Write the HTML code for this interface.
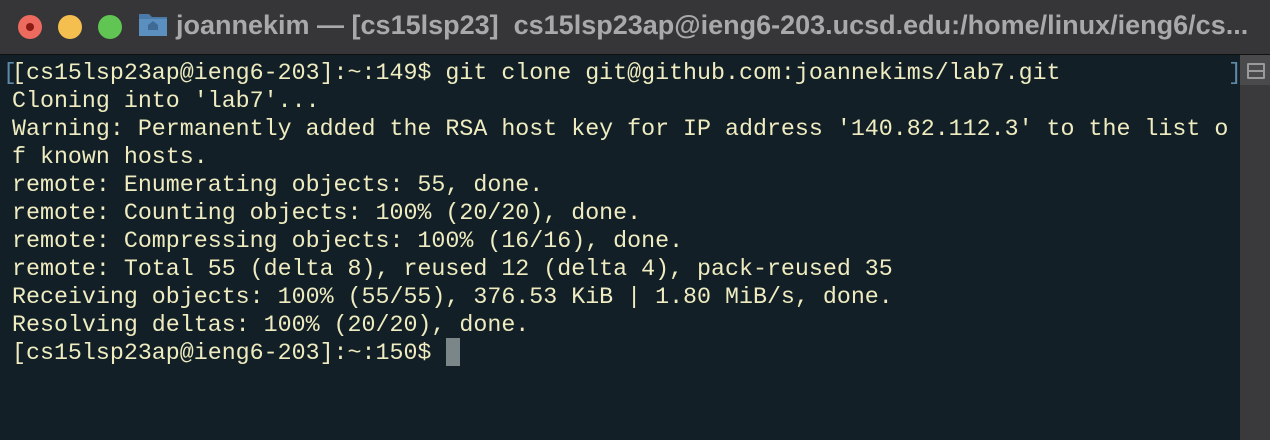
<!DOCTYPE html>
<html><head><style>
body{margin:0;width:1270px;height:440px;overflow:hidden;background:#131f26;font-family:"Liberation Sans",sans-serif}
.tb{position:absolute;left:0;top:0;width:1270px;height:54px;background:#363638;border-bottom:1px solid #111}
.d{position:absolute;top:15px;width:24px;height:24px;border-radius:50%}
.t{position:absolute;left:176px;top:10px;font-size:27px;font-weight:bold;color:#a9a9ab;white-space:nowrap}
.term{position:absolute;left:12px;top:59px;font-family:"Liberation Mono",monospace;font-size:23.3px;line-height:28px;color:#eeecc0;white-space:pre}
.sb{position:absolute;left:1240px;top:55px;width:30px;height:385px;background:#3a3a3c}
.cur{position:absolute;left:446px;top:338px;width:14px;height:28px;background:#7a8688}
</style></head><body>
<div class="tb">
<div class="d" style="left:18px;background:#ec6a5e"><div style="position:absolute;left:8px;top:8px;width:8px;height:8px;border-radius:50%;background:#8a1a12"></div></div>
<div class="d" style="left:58px;background:#f4bf4f"></div>
<div class="d" style="left:98px;background:#61c554"></div>
<svg style="position:absolute;left:138px;top:11px" width="30" height="26"><path d="M1 3h10l3 3h15v19H1z" fill="#4a7aa8"/><path d="M1 8h28v17H1z" fill="#5b8fc0"/><path d="M10 19v-5l5-4 5 4v5z" fill="#3f6a95"/></svg>
<div class="t">joannekim — [cs15lsp23]&nbsp; cs15lsp23ap@ieng6-203.ucsd.edu:/home/linux/ieng6/cs...</div>
</div>
<div style="position:absolute;left:3px;top:59px;color:#5d8aa8;font-family:'Liberation Mono',monospace;font-size:23px;line-height:28px">[</div>
<div style="position:absolute;left:1228px;top:59px;color:#5d8aa8;font-family:'Liberation Mono',monospace;font-size:23px;line-height:28px">]</div>
<div class="term">[cs15lsp23ap@ieng6-203]:~:149$ git clone git@github.com:joannekims/lab7.git
Cloning into 'lab7'...
Warning: Permanently added the RSA host key for IP address '140.82.112.3' to the list o
f known hosts.
remote: Enumerating objects: 55, done.
remote: Counting objects: 100% (20/20), done.
remote: Compressing objects: 100% (16/16), done.
remote: Total 55 (delta 8), reused 12 (delta 4), pack-reused 35
Receiving objects: 100% (55/55), 376.53 KiB | 1.80 MiB/s, done.
Resolving deltas: 100% (20/20), done.
[cs15lsp23ap@ieng6-203]:~:150$ </div>
<div class="cur"></div>
<div class="sb"><div style="position:absolute;left:0;top:0;width:30px;height:30px;background:#4a4a4c"><div style="position:absolute;left:7px;top:8px;width:14px;height:12px;border:2px solid #999;border-radius:1px"></div><div style="position:absolute;left:7px;top:15px;width:18px;height:2px;background:#999"></div></div></div>
</body></html>
